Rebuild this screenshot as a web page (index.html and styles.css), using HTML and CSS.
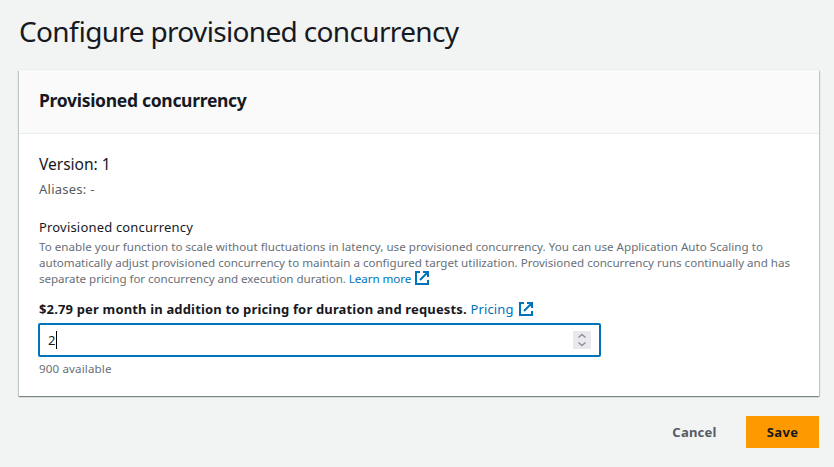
FILE: index.html
```html
<!DOCTYPE html>
<html lang="en">
<head>
<meta charset="utf-8">
<title>Configure provisioned concurrency</title>
<link rel="stylesheet" href="styles.css">
</head>
<body>
<main>
  <h1>Configure provisioned concurrency</h1>
  <section class="card">
    <header><h2>Provisioned concurrency</h2></header>
    <div class="body">
      <h3>Version: 1</h3>
      <p class="aliases">Aliases: -</p>
      <div class="label">Provisioned concurrency</div>
      <p class="help"><span class="lead">To enable your function to scale without fluctuations in latency, use provisioned concurrency. You can use Application Auto Scaling to</span><br><span class="middle">automatically adjust provisioned concurrency to maintain a configured target utilization. Provisioned concurrency runs continually and has</span><br><span class="last">separate pricing for concurrency and execution duration. <a>Learn more<svg class="ext" viewBox="0 0 14 14"><path d="M5 1H1v12h12V9M8 1h5v5M5 9l7.500-7.500"/></svg></a></span></p>
      <p class="price"><b>$2.79 per month in addition to pricing for duration and requests.</b> <a>Pricing<svg class="ext" viewBox="0 0 14 14"><path d="M5 1H1v12h12V9M8 1h5v5M5 9l7.500-7.500"/></svg></a></p>
      <div class="input"><span class="value">2</span><svg class="spin" viewBox="0 0 18 18"><path d="M5.500 6.500L9 3.500l3.500 3M5.500 11.500l3.500 3 3.500-3"/></svg></div>
      <p class="available">900 available</p>
    </div>
  </section>
  <footer><button class="cancel">Cancel</button><button class="save">Save</button></footer>
</main>
</body>
</html>
```
FILE: styles.css
```css
* { box-sizing: border-box; }
body { margin: 0; background: #f2f3f3; color: #16191f; font: 13px/20px "Noto Sans", sans-serif; }
main { padding: 13px 15px 0 19px; }
h1, h2, h3, p { margin: 0; font-weight: 400; }
h1 { font-size: 28px; line-height: 36px; letter-spacing: -.66px; font-feature-settings: "liga" 1; }
.card { margin-top: 21px; background: #fff; box-shadow: 0 0 1px rgba(0,28,36,.15), 0 1px 1px rgba(0,28,36,.3), 1px 1px 1px rgba(0,28,36,.15), -1px 1px 1px rgba(0,28,36,.15); height: 326px; }
header { height: 64px; padding: 19px 20px; background: #fafafa; border-bottom: 1px solid #eaeded; }
h2 { font-size: 17.5px; line-height: 22px; font-weight: 700; letter-spacing: -.3px; }
.body { padding: 19px 20px; }
h3 { font-size: 15.6px; line-height: 22px; letter-spacing: -.05px; }
.aliases { margin-top: 4px; color: #545b64; letter-spacing: .25px; }
.label { margin-top: 18px; letter-spacing: .18px; }
.help { font-size: 11.6px; line-height: 16px; color: #687078; white-space: nowrap; margin-top: 2px; }
.lead { letter-spacing: .02px; }
.middle { letter-spacing: -.015px; }
.last { letter-spacing: -.05px; }
a { color: #0073bb; }
.ext { width: 14px; height: 14px; fill: none; stroke: #0073bb; stroke-width: 2; vertical-align: 0; margin: -2px 0 -2px 4px; }
.price { margin-top: 12px; letter-spacing: .16px; }
.price .ext { margin-left: 5px; }
.input { width: 563px; height: 34px; margin: 4px 0 0 -1px; border: 2px solid #0073bb; border-radius: 2px; display: flex; align-items: center; justify-content: space-between; padding: 0 8px; }
.value { border-right: 1px solid #000; line-height: 18px; padding-right: .6px; }
.spin { width: 18px; height: 18px; background: #e9e9ed; fill: none; stroke: #8f8f9d; stroke-width: 1.5; }
.available { font-size: 11.6px; line-height: 16px; color: #687078; margin-top: 4px; letter-spacing: .13px; }
footer { display: flex; justify-content: flex-end; margin-top: 20px; }
button { height: 32px; border: 0; background: none; font: 700 13px/20px "Noto Sans", sans-serif; padding: 0 20px; color: #545b64; letter-spacing: .2px; }
.save { width: 73px; border-radius: 1px; background: #ff9900; color: #16191f; margin-left: 9.5px; letter-spacing: .4px; }
```
